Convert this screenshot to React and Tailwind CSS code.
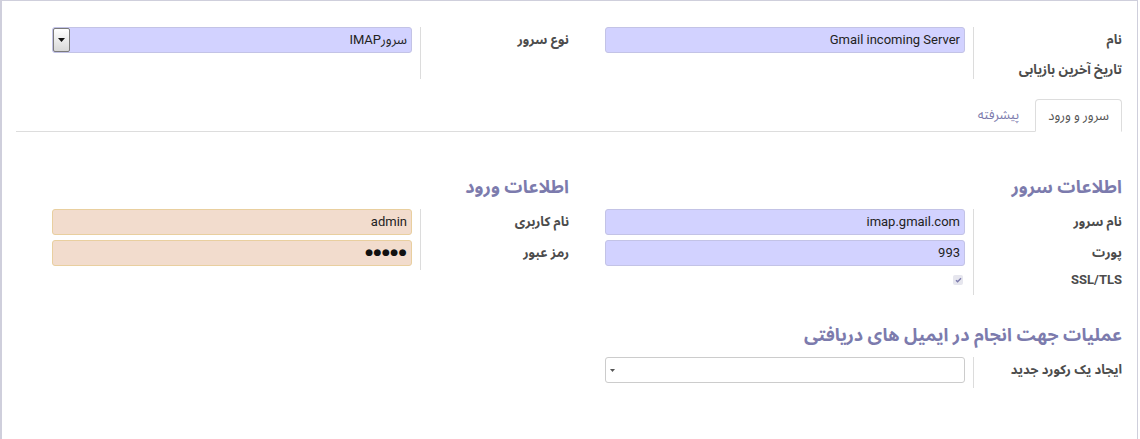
import React from 'react';

const labelCls = 'font-bold text-[13px] text-[#4c4c4c] whitespace-nowrap';

function Group({ rows, tail = 0 }) {
  return (
    <div className="flex">
      <div className="w-[149px] border-l border-[#dcdcdc] flex flex-col gap-[5px]" style={{ paddingBottom: tail }}>
        {rows.map((r, i) => (
          <div key={i} className={`flex ${r.h || 'h-[26px]'} ${r.align || 'items-center'}`}>
            <span className={labelCls}>{r.label}</span>
          </div>
        ))}
      </div>
      <div className="flex-1 pr-2 pl-[36px] flex flex-col gap-[5px]">
        {rows.map((r, i) => (
          <div key={i} className={`flex ${r.h || 'h-[26px]'}`}>
            {r.field}
          </div>
        ))}
      </div>
    </div>
  );
}

function Box({ children, tone = 'blue' }) {
  const tones = {
    blue: 'bg-[#d2d2ff] border-[#c3c3e6]',
    peach: 'bg-[#f2dccd] border-[#e9cf9f]',
    white: 'bg-white border-[#cccccc]',
  };
  return (
    <div className={`w-full h-full border rounded-[3px] flex items-center px-[4px] text-[13px] text-[#222] ${tones[tone]}`}>
      {children}
    </div>
  );
}

function Header({ children }) {
  return (
    <h2 className="h-[28px] leading-[28px] mb-[8px] text-[18px] font-bold text-[#7c7bad] whitespace-nowrap">
      {children}
    </h2>
  );
}

export default function App() {
  return (
    <div
      dir="rtl"
      className="w-[1138px] h-[439px] bg-white border-t border-l-2 border-r border-[#cfcfdc] pt-[26px] pr-[15px] pl-[14px] font-[Roboto,'Noto_Sans_Arabic','Noto_Naskh_Arabic',Vazirmatn,'DejaVu_Sans',sans-serif]"
    >
      {/* top row */}
      <div className="grid grid-cols-2">
        <Group
          rows={[
            { label: 'نام', field: <Box>Gmail incoming Server</Box> },
            { label: 'تاریخ آخرین بازیابی', h: 'h-[21px]', align: 'items-end', field: null },
          ]}
        />
        <Group
          tail={6}
          rows={[
            {
              label: 'نوع سرور',
              field: (
                <div className="relative w-full h-full border border-[#c3c3e6] rounded-[3px] bg-[#d2d2ff] flex items-center px-[4px] text-[13px] text-[#222]">
                  سرورIMAP
                  <div className="absolute left-0 top-0 h-full w-[17px] border border-[#7a7a7a] rounded-[2px] bg-gradient-to-b from-white to-[#d8d8d8] flex items-center justify-center">
                    <svg width="7" height="4" viewBox="0 0 7 4">
                      <path d="M0 0h7L3.5 4z" fill="#111" />
                    </svg>
                  </div>
                </div>
              ),
            },
          ]}
        />
      </div>

      {/* tabs */}
      <div className="mt-[20px] h-[33px] border-b border-[#dddddd] flex items-end">
        <div className="h-[33px] -mb-px px-[12px] border border-[#dddddd] border-b-white rounded-t-[4px] bg-white flex items-center text-[13px] text-[#555]">
          سرور و ورود
        </div>
        <div className="h-[33px] pr-[16px] pl-[12px] flex items-center text-[13px] text-[#7c7bad]">
          پیشرفته
        </div>
      </div>

      {/* server / login */}
      <div className="grid grid-cols-2 mt-[41px]">
        <div>
          <Header>اطلاعات سرور</Header>
          <Group
            tail={6}
            rows={[
              { label: 'نام سرور', field: <Box>imap.gmail.com</Box> },
              { label: 'پورت', field: <Box>993</Box> },
              {
                label: 'SSL/TLS',
                h: 'h-[18px]',
                field: (
                  <div className="h-full flex items-center pr-[2px]">
                    <div className="w-[10px] h-[10px] rounded-[2px] bg-[#e6e6ee] flex items-center justify-center">
                      <svg width="7" height="6" viewBox="0 0 7 6">
                        <path d="M1 3.2l1.6 1.6L6 1.2" stroke="#7c7bad" strokeWidth="1.4" fill="none" />
                      </svg>
                    </div>
                  </div>
                ),
              },
            ]}
          />
        </div>
        <div>
          <Header>اطلاعات ورود</Header>
          <Group
            tail={4}
            rows={[
              { label: 'نام کاربری', field: <Box tone="peach">admin</Box> },
              {
                label: 'رمز عبور',
                field: (
                  <Box tone="peach">
                    <span className="text-[9px] tracking-[0.5px] text-[#111]">●●●●●</span>
                  </Box>
                ),
              },
            ]}
          />
        </div>
      </div>

      {/* actions */}
      <div className="grid grid-cols-2 mt-[26px]">
        <div>
          <Header>عملیات جهت انجام در ایمیل های دریافتی</Header>
          <Group
            tail={5}
            rows={[
              {
                label: 'ایجاد یک رکورد جدید',
                field: (
                  <Box tone="white">
                    <div className="mr-auto">
                      <svg width="5" height="3" viewBox="0 0 5 3">
                        <path d="M0 0h5L2.5 3z" fill="#555" />
                      </svg>
                    </div>
                  </Box>
                ),
              },
            ]}
          />
        </div>
        <div />
      </div>
    </div>
  );
}
